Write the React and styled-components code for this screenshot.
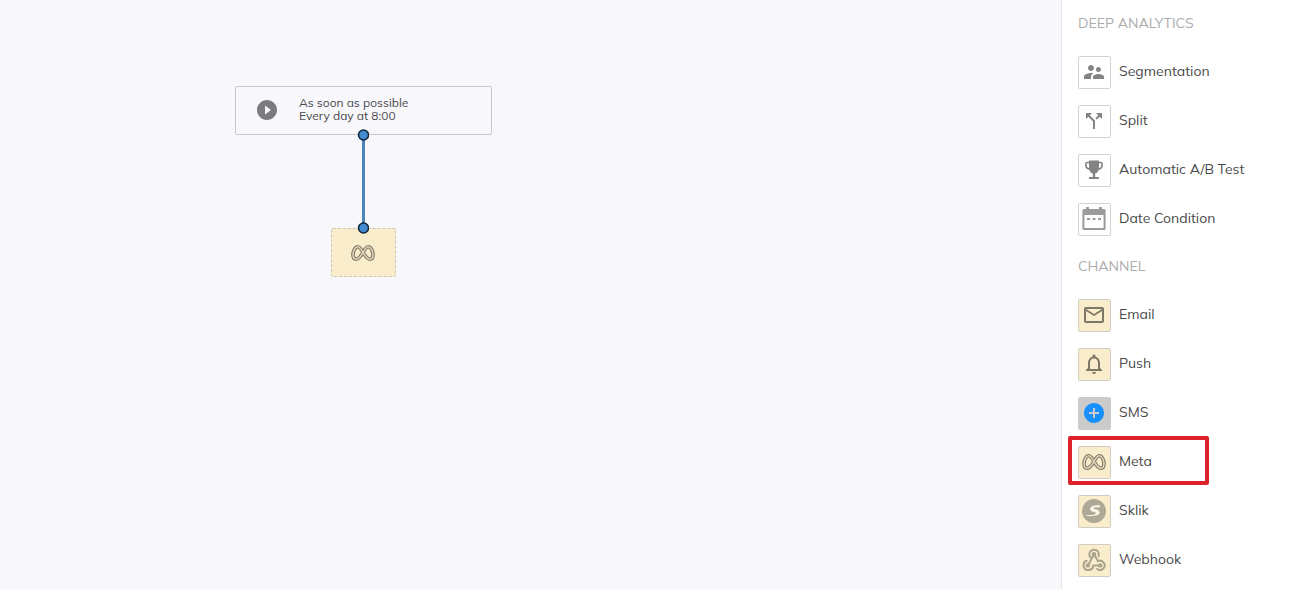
import React, { useState } from "react";
import styled, { createGlobalStyle } from "styled-components";
import {
  MdSupervisorAccount,
  MdCallSplit,
  MdMailOutline,
  MdNotificationsNone,
  MdAddCircle,
  MdPlayCircleFilled,
} from "react-icons/md";

const LOOPS =
  "M12 8C9.8 4.2 8.6 2 6.6 2C3.8 2 1.6 6.2 1.6 10.4C1.6 13.4 2.9 15 4.8 15C7.6 15 9.6 12 12 8C14.2 4.2 15.400 2 17.4 2C20.2 2 22.4 6.2 22.4 10.4C22.4 13.4 21.1 15 19.2 15C16.4 15 14.4 12 12 8Z";

const MetaIcon = () => (
  <svg width="24" height="24" viewBox="-0.5 -4 25 25" fill="none" aria-hidden="true">
    <path d={LOOPS} stroke="#7f7967" strokeWidth="3.8" />
    <path d={LOOPS} stroke="#e0d5b8" strokeWidth="1.6" />
  </svg>
);

const TrophyIcon = () => (
  <svg width="24" height="24" viewBox="0 0 24 24" fill="#838383" aria-hidden="true">
    <path d="M7 2.5h10v7.500c0 3-1.800 5-3.800 5.600V19H17v2H7v-2h3.800v-3.400C8.800 15 7 13 7 10z" />
    <path
      d="M7.500 4.500H5.200C4 4.500 3.800 5.300 3.800 6.500c0 3 1.600 4.500 4.200 4.800M16.500 4.500h2.300c1.200 0 1.400.8 1.400 2 0 3-1.600 4.500-4.200 4.800"
      fill="none"
      stroke="#838383"
      strokeWidth="1.6"
    />
  </svg>
);

const CalendarIcon = () => (
  <svg width="24" height="24" viewBox="0 0 24 24" fill="#9b9b9b" aria-hidden="true">
    <path
      fillRule="evenodd"
      d="M4 0h3v2h10V0h3v2h2a1.600 1.600 0 0 1 1.600 1.600v17.800A1.600 1.600 0 0 1 22 23H2a1.600 1.600 0 0 1-1.600-1.600V3.600A1.600 1.600 0 0 1 2 2h2zM2.400 8v13h19.200V8z"
    />
    <path d="M5 11h3v2H5zM10.500 11h3v2h-3zM16 11h3v2h-3z" />
  </svg>
);

const SklikIcon = () => (
  <svg width="24" height="24" viewBox="0 0 24 24" aria-hidden="true">
    <circle cx="12" cy="12" r="12" fill="#aea997" />
    <path
      d="M18 6.400v2c-3.500-.2-6.400 0-6.600.7-.2 1 6.600 1.200 6.300 4.500-.4 3.200-6.700 4.100-13.400 3.200v-.7c4.800.1 9.400-.6 9.600-1.900.2-1.300-6.200-1.300-5.800-4.400.4-3 5.700-3.800 9.900-3.400z"
      fill="#faf6ea"
    />
  </svg>
);

const WebhookIcon = () => (
  <svg width="24" height="24" viewBox="0 0 24 24" fill="none" stroke="#aaa38d" strokeWidth="2" strokeLinecap="round" aria-hidden="true">
    <path d="M8.300 9.400a4.800 4.800 0 1 1 8.300-1.300" />
    <path d="M11.900 6.300 6.200 17.200" />
    <path d="M12.100 6.300 16 13.200a4.600 4.600 0 1 1-.8 7.800" />
    <path d="M18 17.400h-6.800a4.800 4.800 0 1 1-6.600-4.600" />
    <g fill="#aaa38d" stroke="none">
      <circle cx="12" cy="6.200" r="2.200" />
      <circle cx="5.900" cy="17.400" r="2.200" />
      <circle cx="18.200" cy="17.400" r="2.200" />
    </g>
  </svg>
);

const sections = [
  {
    title: "DEEP ANALYTICS",
    items: [
      { name: "Segmentation", icon: <MdSupervisorAccount size={24} /> },
      { name: "Split", icon: <MdCallSplit size={24} /> },
      { name: "Automatic A/B Test", icon: <TrophyIcon /> },
      { name: "Date Condition", icon: <CalendarIcon /> },
    ],
  },
  {
    title: "CHANNEL",
    items: [
      { name: "Email", tone: "channel", icon: <MdMailOutline size={24} /> },
      { name: "Push", tone: "channel", icon: <MdNotificationsNone size={24} /> },
      { name: "SMS", tone: "add", icon: <MdAddCircle size={24} /> },
      { name: "Meta", tone: "channel", icon: <MetaIcon /> },
      { name: "Sklik", tone: "channel", icon: <SklikIcon /> },
      { name: "Webhook", tone: "channel", icon: <WebhookIcon /> },
    ],
  },
];

const App = () => {
  const [selected, setSelected] = useState("Meta");

  return (
    <Page>
      <GlobalStyle />
      <Canvas>
        <StartNode>
          <MdPlayCircleFilled size={24} />
          <Schedule>
            <div>As soon as possible</div>
            <div>Every day at 8:00</div>
          </Schedule>
        </StartNode>
        <Connector width="12" height="106" viewBox="0 0 12 106" aria-hidden="true">
          <path d="M6.500 6V99" />
          <circle cx="6.500" cy="6" r="5" />
          <circle cx="6.500" cy="99" r="5" />
        </Connector>
        <MetaNode>
          <MetaIcon />
        </MetaNode>
      </Canvas>
      <Sidebar>
        {sections.map((section) => (
          <Section key={section.title}>
            <Heading>{section.title}</Heading>
            <List>
              {section.items.map((item) => (
                <li key={item.name}>
                  <Item
                    type="button"
                    $selected={selected === item.name}
                    onClick={() => setSelected(item.name)}
                  >
                    <Tile $tone={item.tone}>{item.icon}</Tile>
                    <Label>{item.name}</Label>
                  </Item>
                </li>
              ))}
            </List>
          </Section>
        ))}
      </Sidebar>
    </Page>
  );
};

export default App;

const tones = {
  plain: { background: "#ffffff", border: "#d3d3d3", color: "#838383" },
  channel: { background: "#faedcb", border: "#d0cdc4", color: "#7d7766" },
  add: { background: "#cbcbcb", border: "#cbcbcb", color: "#1890ff" },
};

const tone = (key) => (props) => tones[props.$tone || "plain"][key];

const GlobalStyle = createGlobalStyle`
  *,
  *::after {
    box-sizing: border-box;
  }

  body {
    margin: 0;
    font-family: Muli, Mulish, Lato, "Liberation Sans", sans-serif;
    color: #4a4a4a;
    background: #f8f8fc;
  }
`;

const Page = styled.div`
  display: flex;
  height: 100vh;
  overflow: hidden;
`;

const Canvas = styled.main`
  position: relative;
  flex: 1;
  background: #f8f8fc;
`;

const StartNode = styled.div`
  position: absolute;
  top: 86px;
  left: 235px;
  width: 257px;
  height: 49px;
  padding: 0 19px 1px;
  display: flex;
  align-items: center;
  gap: 20px;
  border: 1px solid #c8c8cb;
  border-radius: 2px;
  color: #7b7b7d;
`;

const Schedule = styled.div`
  padding-bottom: 2px;
  font-size: 12px;
  line-height: 13px;
  color: #4a4a4a;
`;

const MetaNode = styled.div`
  position: absolute;
  top: 228px;
  left: 331px;
  width: 65px;
  height: 49px;
  padding: 0 1px 0 0;
  display: flex;
  align-items: center;
  justify-content: center;
  background: #faedcb;
  border: 1px dashed #c9c5ba;
  border-radius: 2px;
`;

const Connector = styled.svg`
  position: absolute;
  z-index: 1;
  top: 129px;
  left: 357px;

  path {
    stroke: #4a86bd;
    stroke-width: 3;
  }

  circle {
    fill: #428bd0;
    stroke: #10253a;
    stroke-width: 1.5;
  }
`;

const Sidebar = styled.aside`
  width: 230px;
  padding: 13px 16px;
  background: #ffffff;
  border-left: 1px solid #e3e3e8;
`;

const Section = styled.section`
  margin-bottom: 20px;
`;

const Heading = styled.h2`
  margin: 0 0 23px;
  font-size: 14px;
  font-weight: 400;
  line-height: 20px;
  color: #acacac;
`;

const List = styled.ul`
  margin: 0;
  padding: 0;
  list-style: none;
  display: flex;
  flex-direction: column;
  gap: 16px;
`;

const Item = styled.button`
  position: relative;
  width: 100%;
  padding: 0;
  display: flex;
  align-items: center;
  gap: 8px;
  border: 0;
  background: none;
  font: inherit;
  color: inherit;
  text-align: left;
  cursor: pointer;

  &::after {
    content: "";
    display: ${(props) => (props.$selected ? "block" : "none")};
    position: absolute;
    top: -10px;
    left: -10px;
    width: 141px;
    height: 49px;
    border: 4px solid #dd232b;
    border-radius: 2px;
  }
`;

const Tile = styled.span`
  width: 33px;
  height: 33px;
  padding: 0 1px 1px 0;
  flex: none;
  display: flex;
  align-items: center;
  justify-content: center;
  border: 1px solid ${tone("border")};
  border-radius: 2px;
  background: ${tone("background")};
  color: ${tone("color")};
`;

const Label = styled.span`
  padding-bottom: 3px;
  font-size: 14px;
  line-height: 20px;
`;
